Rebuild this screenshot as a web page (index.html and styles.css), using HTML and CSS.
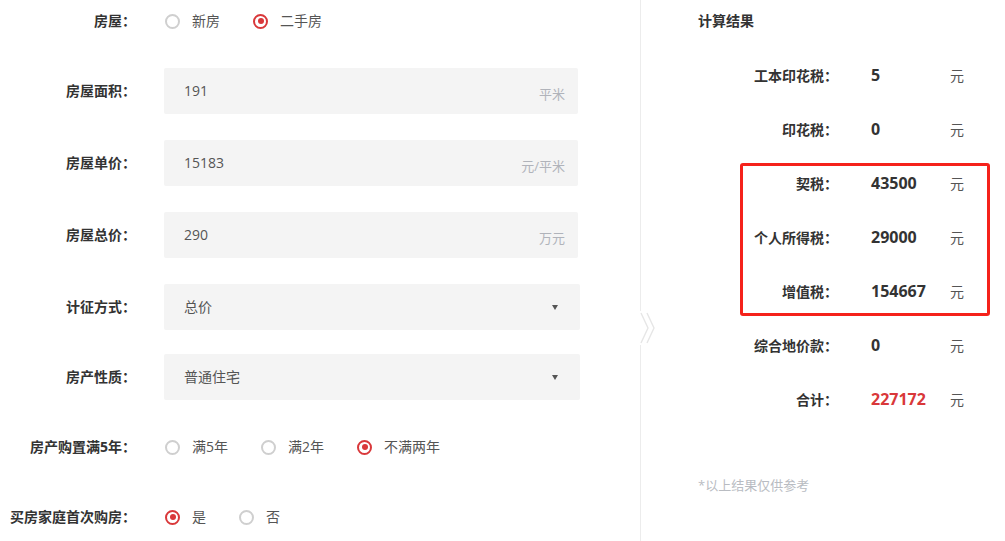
FILE: index.html
```html
<!DOCTYPE html>
<html lang="zh-CN">
<head>
  <meta charset="UTF-8">
  <title>税费计算器</title>
  <link rel="stylesheet" href="styles.css">
</head>
<body>

  <div class="calc">
    <div class="form-panel">

      <div class="form-row first">
        <span class="form-label">房屋：</span>
        <div class="radios">
          <label class="radio"><i class="dot"></i>新房</label>
          <label class="radio checked"><i class="dot"></i>二手房</label>
        </div>
      </div>

      <div class="form-row">
        <span class="form-label">房屋面积：</span>
        <div class="field">
          <span class="field-value">191</span>
          <span class="field-unit">平米</span>
        </div>
      </div>

      <div class="form-row">
        <span class="form-label">房屋单价：</span>
        <div class="field">
          <span class="field-value">15183</span>
          <span class="field-unit">元/平米</span>
        </div>
      </div>

      <div class="form-row">
        <span class="form-label">房屋总价：</span>
        <div class="field">
          <span class="field-value">290</span>
          <span class="field-unit">万元</span>
        </div>
      </div>

      <div class="form-row">
        <span class="form-label">计征方式：</span>
        <div class="field select">
          <span class="field-value">总价</span>
          <i class="caret"></i>
        </div>
      </div>

      <div class="form-row tight">
        <span class="form-label">房产性质：</span>
        <div class="field select">
          <span class="field-value">普通住宅</span>
          <i class="caret"></i>
        </div>
      </div>

      <div class="form-row tight">
        <span class="form-label">房产购置满5年：</span>
        <div class="radios">
          <label class="radio"><i class="dot"></i>满5年</label>
          <label class="radio"><i class="dot"></i>满2年</label>
          <label class="radio checked"><i class="dot"></i>不满两年</label>
        </div>
      </div>

      <div class="form-row tight">
        <span class="form-label">买房家庭首次购房：</span>
        <div class="radios">
          <label class="radio checked"><i class="dot"></i>是</label>
          <label class="radio"><i class="dot"></i>否</label>
        </div>
      </div>

    </div>

    <div class="divider">
      <svg class="divider-arrow" width="18" height="34" viewBox="0 0 18 34">
        <rect x="0" y="0" width="18" height="34" fill="#fff"/>
        <polyline points="1,2 8,17 1,32" fill="none" stroke="#e6e6e6" stroke-width="1.4"/>
        <polyline points="7,2 14,17 7,32" fill="none" stroke="#e6e6e6" stroke-width="1.4"/>
      </svg>
    </div>

    <div class="result-panel">
      <h2 class="result-title">计算结果</h2>

      <div class="result-row">
        <span class="result-label">工本印花税：</span>
        <span class="result-value">5</span>
        <span class="result-unit">元</span>
      </div>
      <div class="result-row">
        <span class="result-label">印花税：</span>
        <span class="result-value">0</span>
        <span class="result-unit">元</span>
      </div>

      <!-- filas marcadas en rojo -->
      <div class="result-group">
        <div class="result-row">
          <span class="result-label">契税：</span>
          <span class="result-value">43500</span>
          <span class="result-unit">元</span>
        </div>
        <div class="result-row">
          <span class="result-label">个人所得税：</span>
          <span class="result-value">29000</span>
          <span class="result-unit">元</span>
        </div>
        <div class="result-row">
          <span class="result-label">增值税：</span>
          <span class="result-value">154667</span>
          <span class="result-unit">元</span>
        </div>
      </div>

      <div class="result-row">
        <span class="result-label">综合地价款：</span>
        <span class="result-value">0</span>
        <span class="result-unit">元</span>
      </div>
      <div class="result-row">
        <span class="result-label">合计：</span>
        <span class="result-value total">227172</span>
        <span class="result-unit">元</span>
      </div>

      <p class="result-note">*以上结果仅供参考</p>
    </div>
  </div>

</body>
</html>
```

FILE: styles.css
```css
body {
  margin: 0;
  font-family: "Open Sans", "Noto Sans CJK SC", sans-serif;
  font-size: 14px;
  color: #333;
  background: #fff;
}

.calc {
  display: flex;
  width: 1005px;
  height: 541px;
  overflow: hidden;
}

/* columna izquierda: formulario */
.form-panel {
  width: 640px;
  flex-shrink: 0;
}

.form-row {
  display: flex;
  align-items: center;
  height: 46px;
  margin-top: 26px;
}

.form-row.first {
  height: 42px;
  margin-top: 0;
}

.form-row.tight {
  margin-top: 24px;
}

.form-label {
  width: 136px;
  text-align: right;
  font-weight: bold;
  color: #333;
  line-height: 20px;
  white-space: nowrap;
}

.radios {
  display: flex;
  margin-left: 29px;
}

.radio {
  display: flex;
  align-items: center;
  color: #555;
  line-height: 20px;
  margin-right: 33px;
}

.dot {
  box-sizing: border-box;
  width: 15px;
  height: 15px;
  border: 2px solid #cfcfcf;
  border-radius: 50%;
  margin-right: 12px;
  position: relative;
}

.radio.checked .dot {
  border-color: #d9383a;
}

.radio.checked .dot::after {
  content: "";
  position: absolute;
  left: 2.5px;
  top: 2.5px;
  width: 6px;
  height: 6px;
  border-radius: 50%;
  background: #d9383a;
}

.field {
  box-sizing: border-box;
  display: flex;
  align-items: center;
  justify-content: space-between;
  width: 414px;
  height: 46px;
  margin-left: 28px;
  padding: 0 13px 0 20px;
  background: #f4f4f4;
  border-radius: 2px;
}

.field.select {
  width: 416px;
  padding-right: 22px;
}

.field-value {
  color: #555;
  line-height: 20px;
}

.field-unit {
  color: #b0b3ba;
  font-size: 13px;
  margin-top: 4px;
}

.caret {
  width: 0;
  height: 0;
  border-left: 3.5px solid transparent;
  border-right: 3.5px solid transparent;
  border-top: 5px solid #555;
}

/* separador con flecha */
.divider {
  position: relative;
  width: 1px;
  flex-shrink: 0;
  background: #ececec;
}

.divider-arrow {
  position: absolute;
  left: 0;
  top: 311px;
}

/* columna derecha: resultados */
.result-panel {
  flex: 1;
  padding-left: 57px;
}

.result-title {
  margin: 11px 0 17px;
  font-size: 14px;
  font-weight: bold;
  line-height: 20px;
  color: #333;
}

.result-row {
  display: flex;
  align-items: center;
  height: 54px;
}

.result-label {
  width: 140px;
  text-align: right;
  font-weight: bold;
  color: #333;
  white-space: nowrap;
}

.result-value {
  width: 79px;
  margin-left: 33px;
  font-size: 16px;
  font-weight: bold;
  color: #333;
}

.result-value.total {
  color: #d9383a;
}

.result-unit {
  color: #555;
}

.result-group {
  position: relative;
}

.result-group::after {
  content: "";
  position: absolute;
  left: 42px;
  right: 15px;
  top: 7px;
  bottom: 2px;
  border: 3px solid #f5221b;
  border-radius: 3px;
}

.result-note {
  margin: 49px 0 0;
  font-size: 13px;
  color: #b9bcc2;
}
```
